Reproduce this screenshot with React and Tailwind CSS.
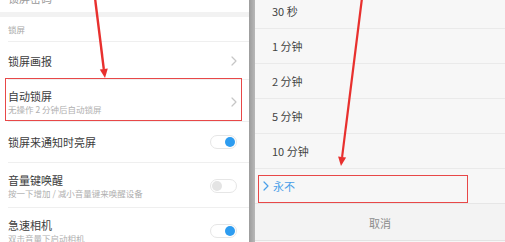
import React from "react";

const font = { fontFamily: '"Noto Sans CJK SC", "Noto Sans", sans-serif' };

function Chevron({ color = "#c6c6c6" }) {
    return (
        <svg width="6" height="10" viewBox="0 0 6 10" fill="none">
            <polyline points="1,1 5,5 1,9" stroke={color} strokeWidth="1.2" strokeLinecap="round" strokeLinejoin="round" />
        </svg>
    );
}

function Toggle({ on }) {
    return (
        <div className={`w-[27px] h-[14px] rounded-full border border-[#e6e6e6] bg-white flex items-center px-[1px] ${on ? "justify-end" : "justify-start"}`}>
            <div className={`w-[10px] h-[10px] rounded-full ${on ? "bg-[#2d9cf0]" : "bg-[#e4e4e4]"}`} />
        </div>
    );
}

function Row({ title, sub, right, height, boxed }) {
    return (
        <div className={`relative shrink-0 ml-2 pr-[12px] flex items-center justify-between border-b border-[#efefef] ${height}`}>
            <div className="flex flex-col">
                <span className="text-[11px] leading-[14px] text-[#3c3c3c]">{title}</span>
                {sub && <span className="text-[8.5px] leading-[12px] text-[#b0b0b0]">{sub}</span>}
            </div>
            {right}
            {boxed && <div className="absolute left-[-3px] right-[7px] top-[-2px] bottom-0 border-[1.5px] border-[#e84848]" />}
        </div>
    );
}

const options = ["30 秒", "1 分钟", "2 分钟", "5 分钟", "10 分钟"];

export default function App() {
    return (
        <div className="relative flex w-[505px] h-[242px] overflow-hidden bg-white" style={font}>
            {/* left settings list */}
            <section className="w-[249px] shrink-0 bg-white flex flex-col">
                <div className="h-[12px] shrink-0 overflow-hidden">
                    <div className="ml-2 mt-[-10px] text-[11px] text-[#9a9a9a]">锁屏密码</div>
                </div>
                <div className="h-[5px] shrink-0 bg-[#f2f2f2]" />
                <div className="h-[25px] shrink-0 ml-2 flex items-center border-b border-[#efefef]">
                    <span className="text-[8.5px] text-[#a8a8a8]">锁屏</span>
                </div>
                <Row title="锁屏画报" height="h-[38px]" right={<Chevron />} />
                <Row title="自动锁屏" sub="无操作 2 分钟后自动锁屏" height="h-[42px] pt-[2px]" right={<Chevron />} boxed />
                <Row title="锁屏来通知时亮屏" height="h-[41px]" right={<Toggle on />} />
                <Row title="音量键唤醒" sub="按一下增加 / 减小音量键来唤醒设备" height="h-[45px] pt-[2px]" right={<Toggle />} />
                <Row title="急速相机" sub="双击音量下启动相机" height="h-[45px] pt-[2px]" right={<Toggle on />} />
            </section>

            <div className="w-[6px] shrink-0 bg-gradient-to-r from-[#9c9c9c] to-[#b8b8b8]" />

            {/* right option sheet */}
            <section className="flex-1 bg-[#f7f7f7] flex flex-col">
                <div className="mt-[-6px] flex flex-col">
                    {options.map((o) => (
                        <div key={o} className="h-[35px] shrink-0 flex items-center pl-[17px] border-b border-[#eaeaea]">
                            <span className="text-[11px] text-[#444]">{o}</span>
                        </div>
                    ))}
                    <div className="relative h-[35px] shrink-0 flex items-center pl-[8px] gap-[4px] border-b border-[#e6e6e6]">
                        <Chevron color="#4a9fe8" />
                        <span className="text-[11px] text-[#4a9fe8]">永不</span>
                        <div className="absolute left-[3px] w-[210px] top-[6px] bottom-0 border-[1.5px] border-[#e84848]" />
                    </div>
                    <div className="h-[37px] shrink-0 flex items-center justify-center pt-[2px] bg-[#f3f3f3] border-b border-[#e3e3e3]">
                        <span className="text-[11px] text-[#8c8c8c]">取消</span>
                    </div>
                </div>
            </section>

            {/* red annotation arrows */}
            <svg className="absolute inset-0 pointer-events-none" width="505" height="242" viewBox="0 0 505 242">
                <line x1="95" y1="-2" x2="103.8" y2="69" stroke="#e8302e" strokeWidth="2.4" />
                <polygon points="105,78 107.8,68.5 99.8,69.5" fill="#e8302e" />
                <line x1="362" y1="-2" x2="342.1" y2="157" stroke="#e8302e" strokeWidth="2.2" />
                <polygon points="341,166 346.1,157.6 338.1,156.6" fill="#e8302e" />
            </svg>
        </div>
    );
}
